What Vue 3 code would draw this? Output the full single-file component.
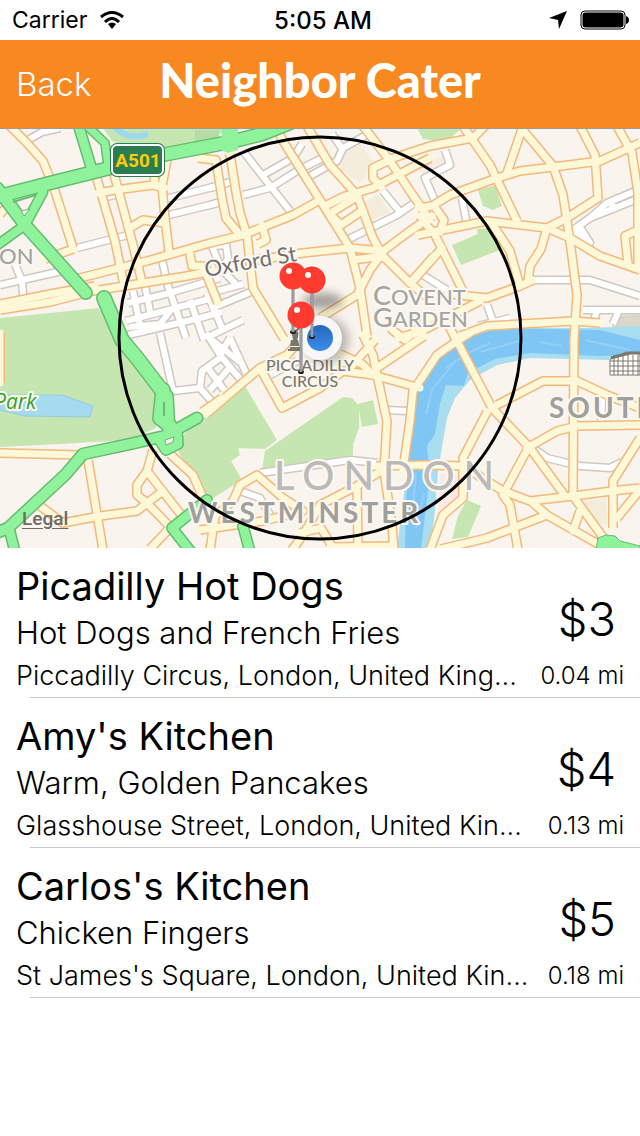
<script setup>
const parks = [
  'M0 190 60 184 98 180 125 215 158 260 156 300 128 312 60 316 0 319Z',
  'M103 0 112 13 130 20 165 20 195 14 225 4 225 0Z',
  'M245 258 277 312 265 321 238 320 240 327 231 333 242 352 210 372 180 327 176 316 190 300Z',
  'M262 342 265 323 343 269 352 270 359 278 359 300 353 317 353 327 327 332Z',
  'M358 276 373 272 378 296 362 299Z',
  'M417 0 462 0 442 17 432 12 423 11Z',
  'M478 62 495 57 502 78 493 82 483 78Z',
  'M452 117 478 106 477 101 492 100 500 122 461 137Z',
  'M467 372 481 378 468 409 452 411 458 388Z',
]

const blocks = [
  { d: 'M345 22 360 16 375 36 360 55 340 42Z', fill: '#f5eddc' },
  { d: 'M364 74 378 66 390 84 372 92Z', fill: '#f5eddc' },
  { d: 'M578 374 606 370 608 398 592 392Z', fill: '#f5eddc' },
  { d: 'M418 40 442 28 445 36 424 48Z', fill: '#fbe9e6' },
  { d: 'M440 346 460 346 458 368 438 384Z', fill: '#fbe9e6' },
  { d: 'M612 188 640 186 640 198 612 200Z', fill: '#ddd6ca' },
]

const whiteRoads = [
  'M28 12 42 4 60 0', 'M103 70 118 66', 'M77 120 128 107', 'M165 71 217 58 230 54', 'M165 88 218 75',
  'M0 157 62 143', 'M22 153 24 177', 'M15 136 22 153', 'M162 132 168 158 186 210',
  'M133 163 142 207', 'M145 158 151 188', 'M128 175 166 166 220 150', 'M126 193 172 181 220 168',
  'M128 207 200 190 222 184', 'M190 172 204 212', 'M207 165 222 200', 'M172 181 160 196 130 199',
  'M243 23 290 83', 'M243 67 270 60 297 43 330 26', 'M263 47 293 30 302 16', 'M310 48 337 33 343 20 370 5',
  'M343 22 332 6', 'M347 112 397 87 417 73', 'M383 63 400 84', 'M210 60 227 55', 'M210 77 226 72',
  'M212 118 226 117 228 130 222 142 236 156', 'M212 118 220 138', 'M210 165 243 156', 'M210 181 253 163',
  'M210 208 243 192', 'M445 22 450 37 425 50 435 73', 'M462 70 467 97',
  'M573 102 590 90 607 75 640 61', 'M590 90 640 70', 'M609 74 615 80', 'M573 102 590 115 578 96',
  'M533 152 590 152 640 168', 'M583 182 640 182', 'M593 196 597 182', 'M613 196 619 182',
  'M423 147 447 162', 'M487 177 493 193', 'M478 198 510 190', 'M640 142 632 140',
  'M533 320 547 330 580 338 610 340 622 334', 'M602 270 601 300',
  'M260 345 350 332 377 335', 'M387 282 407 283', 'M240 363 260 370 270 387', 'M270 247 297 233',
  'M160 205 173 263 200 260 214 276', 'M200 260 202 243 220 230', 'M206 205 220 227 246 258',
  'M230 210 246 245', 'M210 262 232 237', 'M220 227 230 210', 'M208 240 224 262', 'M212 212 240 234',
]

const yellowRoads = [
  'M8 -4 25 13 43 33 55 63 73 120', 'M95 44 115 113 124 157', 'M114 46 133 117 142 154', 'M98 65 115 62 153 57 164 60',
  'M153 36 155 56', 'M167 32 162 58 165 90 169 124', 'M0 182 50 174 93 163 187 148 212 143', 'M0 176 50 166 95 158',
  'M76 151 147 133 210 115 243 107 293 87 320 72', 'M0 86 10 76', 'M45 131 73 121', 'M130 100 143 92 165 95',
  'M198 30 216 32 222 70 226 90 240 107', 'M230 26 236 64 240 85 247 107 253 160 284 211', 'M258 116 266 112 262 97',
  'M190 126 192 138 203 138 218 175', 'M275 -2 283 13 320 72 350 120 360 160 367 208',
  'M307 -2 330 37 357 67 373 110 384 130', 'M363 -2 390 33 410 63 430 92', 'M325 78 345 68 373 60 407 42 430 30',
  'M392 31 373 40 373 50 381 59', 'M390 31 430 18 473 10 486 -3', 'M250 133 303 125 350 120 383 123 410 103 432 88',
  'M330 86 341 97 363 82', 'M334 83 358 68', 'M320 190 357 167 370 142 384 123', 'M353 132 383 128 410 155 428 170',
  'M410 155 434 128', 'M463 -2 490 37 517 93', 'M418 80 432 78 450 67 497 50 520 43 553 39 600 33 640 15',
  'M523 -2 507 45', 'M523 2 553 38 563 67 570 113 577 167 574 212 573 368 605 412',
  'M580 -2 595 27 598 70 567 90 547 100 541 121 530 138 528 154', 'M418 107 487 93 547 100 570 110 600 128 640 142',
  'M617 -2 632 25 638 65 638 140', 'M628 136 625 108 640 101', 'M433 103 463 163', 'M493 97 510 123 520 158',
  'M450 166 487 170 520 158 533 152', 'M442 120 414 152', 'M460 208 487 198 573 193 600 195',
  'M434 78 444 92 440 104', 'M420 88 432 104', 'M398 210 420 204 480 173', 'M390 200 405 212 430 190',
  'M206 286 260 240 287 227 304 208', 'M260 240 282 280 320 260 343 243 373 247 420 260',
  'M340 226 362 236 373 247', 'M350 240 375 212', 'M363 207 373 227 377 247 387 293 384 343 392 397 394 422',
  'M424 208 377 240', 'M403 342 410 293 413 263 437 227 457 213 470 205', 'M376 338 425 337 463 338 503 363 530 373 573 368 620 362 640 360',
  'M384 341 357 358 320 377 303 407 292 422', 'M200 402 263 393 303 383 283 370 257 347 240 357 233 373 215 388 210 422',
  'M357 360 358 417', 'M300 405 321 400 333 420', 'M330 419 392 418', 'M457 213 492 280 530 320 565 368',
  'M448 196 458 216', 'M497 277 543 253 577 253 607 267 642 281', 'M487 284 463 330 464 338', 'M527 320 557 303 577 298 642 297',
  'M527 322 503 367 510 377 518 422', 'M463 340 463 370 443 387 430 422', 'M441 421 487 410 547 387 533 375',
  'M545 386 598 416', 'M580 383 573 403', 'M640 310 613 353 613 400', 'M640 362 617 390',
  'M0 325 80 327', 'M88 332 103 422', 'M40 378 63 395 100 388 137 383 147 375 163 363', 'M153 322 147 343 182 388',
  'M147 343 137 357 137 367 147 375 174 403', 'M170 326 193 347 203 370', 'M168 402 150 421', 'M0 205 0 255',
  'M202 284 222 270',
]

const greenRoads = [
  { d: 'M-4 69 50 55 110 40 167 26 230 14 262 6 290 -5', w: 13 },
  { d: 'M78 -4 92 42', w: 10 },
  { d: 'M84 -5 105 15 108 38', w: 8 },
  { d: 'M-3 60 25 97 86 165', w: 12 },
  { d: 'M-4 118 25 97 43 64', w: 9 },
  { d: 'M104 170 122 212 137 230 163 264', w: 14 },
  { d: 'M163 262 160 290 170 298', w: 14 },
  { d: 'M167 268 169 304', w: 12 },
  { d: 'M197 290 165 308 130 316 83 326 66 346 8 400 -4 405', w: 11 },
  { d: 'M158 310 166 322 178 316 177 302', w: 10 },
  { d: 'M9 400 15 424', w: 10 },
  { d: 'M207 372 172 400 191 424', w: 10 },
  { d: 'M243 398 250 424', w: 10 },
]

const pins = [
  { x: 293, y: 148, foot: 204 },
  { x: 312, y: 152, foot: 209 },
  { x: 301, y: 187, foot: 244 },
]

const meals = [
  { name: 'Picadilly Hot Dogs', dish: 'Hot Dogs and French Fries', address: 'Piccadilly Circus, London, United King...', price: '$3', distance: '0.04 mi' },
  { name: "Amy's Kitchen", dish: 'Warm, Golden Pancakes', address: 'Glasshouse Street, London, United Kin...', price: '$4', distance: '0.13 mi' },
  { name: "Carlos's Kitchen", dish: 'Chicken Fingers', address: "St James's Square, London, United Kin...", price: '$5', distance: '0.18 mi' },
]
</script>

<template>
  <div class="screen">
    <div class="status">
      <div class="carrier">
        <span>Carrier</span>
        <svg class="wifi" viewBox="0 0 26 20" aria-hidden="true">
          <path d="M2 7Q13-2 24 7" fill="none" stroke="#000" stroke-width="3" />
          <path d="M6 12Q13 5 20 12" fill="none" stroke="#000" stroke-width="3" />
          <path d="M9 14Q13 11 17 14L13 19Z" />
        </svg>
      </div>
      <span class="clock">5:05 AM</span>
      <div class="power">
        <svg class="arrow" viewBox="0 0 20 20" aria-hidden="true"><path d="M19 1 1 8 10 10 11 19Z" /></svg>
        <svg class="battery" viewBox="0 0 50 20" aria-hidden="true">
          <rect x="1" y="1" width="44" height="18" rx="4" fill="#fff" stroke="#000" stroke-width="1" />
          <rect x="2.5" y="2.5" width="41" height="15" rx="3" />
          <path d="M46 6Q49 7 49 10T46 14Z" />
        </svg>
      </div>
    </div>

    <header class="bar">
      <button type="button" class="back">Back</button>
      <h1>Neighbor Cater</h1>
    </header>

    <div class="map">
      <svg class="canvas" viewBox="0 0 640 420" role="img" aria-label="Map of central London">
        <defs>
          <filter id="soft" x="-50%" y="-50%" width="200%" height="200%"><feGaussianBlur stdDeviation="5" /></filter>
          <linearGradient id="dot" x1="0" y1="0" x2="0" y2="1">
            <stop offset="0" stop-color="#2469b8" /><stop offset="1" stop-color="#3a8ef0" />
          </linearGradient>
        </defs>
        <rect width="640" height="420" fill="#f9f4ed" />
        <path v-for="b in blocks" :key="b.d" :d="b.d" :fill="b.fill" />
        <path v-for="d in parks" :key="d" :d="d" fill="#c5e6b1" />
        <rect x="195" y="2" width="24" height="15" fill="#b5dca4" />
        <path d="M0 267H62L93 278 90 289 25 288 0 282Z" fill="#a6dbef" stroke="#94cbdc" stroke-width="1" />
        <path d="M114-1Q128 13 148 6" fill="none" stroke="#9ed8ee" stroke-width="6" />
        <path d="M640 198 585 200 500 200 475 207 450 218 437 230 425 247 417 262 414 285 408 330 403 375 397 420H430L435 383 438 343 443 313 447 290 455 270 470 252 497 237 530 230 607 232 640 232Z" fill="#a8def0" />
        <path d="M640 212 600 202 500 200 475 207 450 218 437 230 425 247 417 262 414 285 409 330 406 375 405 420H421L426 380 430 345 427 318 435 306 440 276 446 257 464 258 468 245 495 231 530 225 600 228 640 226Z" fill="#80c6f5" />
        <path d="M426 286 432 262 456 232M446 240 466 226 490 215M480 224 520 213M540 214 562 218M585 212 630 222M412 390 416 345M416 400 424 365" fill="none" stroke="#92d0f7" stroke-width="2" />

        <g fill="none" stroke-linejoin="round">
          <g stroke="#d0c8c0" stroke-width="9"><path v-for="d in whiteRoads" :key="d" :d="d" /></g>
          <g stroke="#fff" stroke-width="6"><path v-for="d in whiteRoads" :key="d" :d="d" /></g>
          <g stroke="#f3b87c" stroke-width="10"><path v-for="d in yellowRoads" :key="d" :d="d" /></g>
          <g stroke="#fdf9d8" stroke-width="7" stroke-linecap="round"><path v-for="d in yellowRoads" :key="d" :d="d" /></g>
          <g stroke="#68bb72" stroke-linecap="round"><path v-for="r in greenRoads" :key="r.d" :d="r.d" :stroke-width="r.w + 2" /></g>
          <g stroke="#8ff39c" stroke-linecap="round"><path v-for="r in greenRoads" :key="r.d" :d="r.d" :stroke-width="r.w - 1" /></g>
          <path d="M13 74 36 67M164 274V288" stroke="#68bb72" stroke-width="2" />
        </g>
        <path d="M222 0H238V22L228 25 221 22Z" fill="#8ff39c" />
        <path d="M596 422 598 410 606 407 615 408 620 413 640 418V422Z" fill="#8ff39c" stroke="#68bb72" />
        <path d="M165 312 174 309 173 314 166 317ZM21 83 30 81 24 88Z" fill="#f9f4ed" stroke="#68bb72" />

        <g>
          <rect x="110" y="15" width="55" height="34" rx="7" fill="#2a7d50" />
          <rect x="112" y="17" width="51" height="30" rx="5" fill="#2a7d50" stroke="#fff" stroke-width="2" />
          <text x="138" y="39" class="shield">A501</text>
        </g>

        <g fill="#fff" stroke="#7c776b" stroke-width="1">
          <path d="M610 247H640V226L626 224 620 227 613 228 610 232Z" />
          <path d="M614 228V247M618 229V247M623 228V247M628 227V247M633 227V247M638 227V247M610 233H640M610 238H640M610 243H640" fill="none" />
          <path d="M611 230 618 228 630 225H640" fill="none" stroke-width="3" />
        </g>

        <g class="labels">
          <text x="-1" y="136" class="area">ON</text>
          <text x="206" y="149" class="street" transform="rotate(-10 206 149)">Oxford St</text>
          <text x="373" y="177" class="area"><tspan class="initial">C</tspan>OVENT</text>
          <text x="373" y="199" class="area"><tspan class="initial">G</tspan>ARDEN</text>
          <text x="549" y="290" class="district">SOUTH</text>
          <text x="-6" y="281" class="park">Park</text>
          <text x="274" y="362" class="city">LONDON</text>
          <text x="188" y="395" class="district">WESTMINSTER</text>
          <text x="310" y="243" class="place">PICCADILLY</text>
          <text x="310" y="259" class="place">CIRCUS</text>
        </g>

        <circle cx="320" cy="210" r="201" fill="none" stroke="#000" stroke-width="3" />

        <g fill="#7c776b">
          <path d="M291 212H299L300 218H290ZM292 206 296 201 299 206 297 212H293Z" />
          <path d="M288 221H301V223H288ZM290 219H300V223H290Z" />
          <path d="M296 203 300 199M296 206 301 208" stroke="#7c776b" stroke-width="2" />
        </g>

        <ellipse cx="323" cy="173" rx="20" ry="8" fill="#000" opacity=".35" filter="url(#soft)" />
        <circle cx="326" cy="212" r="23" fill="#000" opacity=".25" filter="url(#soft)" />
        <circle cx="320" cy="210" r="22" fill="#f7f7f8" />
        <circle cx="320" cy="210" r="13" fill="url(#dot)" />
        <g v-for="p in pins" :key="p.x">
          <ellipse :cx="p.x" :cy="p.foot" rx="3" ry="2" fill="#222" />
          <path :d="`M${p.x} ${p.y}V${p.foot}`" stroke="#85858a" stroke-width="3" />
          <path :d="`M${p.x} ${p.y}V${p.foot}`" stroke="#b5b5b9" stroke-width="1" />
          <circle :cx="p.x" :cy="p.y" r="13.5" fill="#ff3b30" />
          <circle :cx="p.x - 4" :cy="p.y - 5" r="3" fill="#fff" />
        </g>
        <path d="M0 .5H640" stroke="#9c9a92" stroke-width="1" />
      </svg>
      <a href="#legal" class="legal">Legal</a>
    </div>

    <ul class="meals">
      <li v-for="m in meals" :key="m.name">
        <div class="main">
          <div>
            <h2>{{ m.name }}</h2>
            <p class="dish">{{ m.dish }}</p>
          </div>
          <span class="price">{{ m.price }}</span>
        </div>
        <div class="where">
          <p class="address">{{ m.address }}</p>
          <span class="distance">{{ m.distance }}</span>
        </div>
      </li>
    </ul>
  </div>
</template>

<style>
body {
  margin: 0;
  background: #fff;
}
</style>

<style scoped>
.screen {
  font-family: Inter, "Liberation Sans", sans-serif;
  color: #000;
  background: #fff;
}

.status {
  display: grid;
  grid-template-columns: 1fr auto 1fr;
  align-items: center;
  height: 40px;
  padding: 0 10px 0 12px;
  font-size: 23px;
}

.carrier,
.power {
  display: flex;
  align-items: center;
  gap: 12px;
}

.power {
  justify-content: flex-end;
}

.clock {
  padding-left: 4px;
  font-size: 24px;
  font-weight: 500;
}

.wifi {
  width: 26px;
  height: 20px;
}

.arrow {
  width: 20px;
  height: 20px;
}

.battery {
  width: 50px;
  height: 20px;
}

.bar {
  display: grid;
  grid-template-columns: 1fr auto 1fr;
  align-items: center;
  height: 88px;
  padding: 0 16px;
  background: #f88820;
  color: #fff;
}

.back {
  justify-self: start;
  padding: 0;
  border: 0;
  background: none;
  color: inherit;
  font: 300 33px Inter, "Liberation Sans", sans-serif;
}

h1 {
  margin: 0;
  padding-bottom: 8px;
  font: 900 47px/56px Lato, sans-serif;
}

.map {
  position: relative;
}

.canvas {
  display: block;
  width: 100%;
}

.shield {
  font: bold 19px Roboto, sans-serif;
  fill: #fdcb0a;
  text-anchor: middle;
}

.labels text {
  font-family: Lato, sans-serif;
  paint-order: stroke;
  stroke: #fbf8f2;
  stroke-width: 4px;
  stroke-linejoin: round;
}

.labels .area {
  fill: #a5a4a0;
  font-size: 22px;
  font-weight: 500;
}

.labels .initial {
  font-size: 27px;
}

.labels .street {
  fill: #707070;
  font-size: 22px;
}

.labels .district {
  fill: #a09f9b;
  font-size: 28px;
  font-weight: 700;
  letter-spacing: 3px;
}

.labels .city {
  fill: #bcbab6;
  font-size: 40px;
  font-weight: 500;
  letter-spacing: 9px;
}

.labels .park {
  fill: #36a027;
  font: italic 21px "Open Sans", sans-serif;
}

.labels .place {
  fill: #7c776b;
  font-size: 16px;
  font-weight: 500;
  text-anchor: middle;
}

.legal {
  position: absolute;
  left: 22px;
  bottom: 18px;
  color: #6e6b66;
  font: 500 19px/22px Roboto, sans-serif;
  text-underline-offset: 3px;
}

.meals {
  margin: 0;
  padding: 0;
  list-style: none;
}

.meals li {
  display: flex;
  flex-direction: column;
  padding: 14px 16px 2px;
  background: linear-gradient(#c8c7cc, #c8c7cc) no-repeat 30px 100% / 100% 1px;
}

.main,
.where {
  display: flex;
  align-items: center;
  justify-content: space-between;
  white-space: nowrap;
}

h2 {
  margin: 0;
  font: 400 38px/48px Inter, sans-serif;
}

p {
  margin: 0;
}

.dish {
  font-size: 31px;
  font-weight: 300;
  line-height: 45px;
}

.price {
  padding: 20px 8px 0 0;
  font-size: 47px;
  font-weight: 300;
  line-height: 56px;
}

.where {
  font-weight: 300;
  line-height: 41px;
}

.address {
  font-size: 27px;
}

.distance {
  font-size: 24px;
}
</style>
